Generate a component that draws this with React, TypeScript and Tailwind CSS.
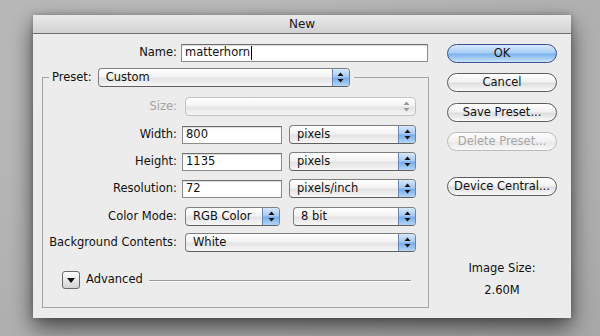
import type { ReactNode } from "react";

function Arrows({ disabled }: { disabled?: boolean }) {
  const fill = disabled ? "#9a9a9a" : "#111";
  return (
    <svg width="7" height="11" viewBox="0 0 7 11">
      <path d="M3.5 0.5 L6.5 4 L0.5 4 Z" fill={fill} />
      <path d="M0.5 7 L6.5 7 L3.5 10.5 Z" fill={fill} />
    </svg>
  );
}

function Popup({ label, className, disabled }: { label?: string; className: string; disabled?: boolean }) {
  return (
    <div
      className={`${className} flex h-[19px] items-stretch overflow-hidden rounded-[4px] border ${
        disabled ? "border-[#c2c2c2]" : "border-[#7f7f7f] border-b-[#5f5f5f]"
      } bg-[linear-gradient(#ffffff,#f3f3f3_45%,#e4e4e4_55%,#f6f6f6)]`}
    >
      <span className="flex-1 pl-[7px] leading-[17px] text-[#111]">{label}</span>
      {disabled ? (
        <span className="flex w-[17px] items-center justify-center">
          <Arrows disabled />
        </span>
      ) : (
        <span className="flex w-[17px] items-center justify-center border-l border-[#6c85b9] bg-[linear-gradient(#d6e8fc,#a7caf3_45%,#78aeea_55%,#b4d6f8)]">
          <Arrows />
        </span>
      )}
    </div>
  );
}

function Field({ value, className, cursor }: { value: string; className: string; cursor?: boolean }) {
  return (
    <div
      className={`${className} flex h-[18px] items-center border border-[#8c8c8c] border-t-[#6e6e6e] bg-white pl-[3px] shadow-[inset_0_1px_1px_rgba(0,0,0,0.15)] text-[#111]`}
    >
      <span>{value}</span>
      {cursor && <span className="ml-px h-[14px] w-px bg-black" />}
    </div>
  );
}

function PushButton({ children, variant }: { children: ReactNode; variant?: "default" | "disabled" }) {
  if (variant === "default") {
    return (
      <div className="flex h-[19px] w-[110px] items-center justify-center rounded-full border border-[#3d4f93] bg-[linear-gradient(#d9eafc,#a9cdf5_45%,#7fb3ec_55%,#c9e4fb)] text-[#111]">
        {children}
      </div>
    );
  }
  if (variant === "disabled") {
    return (
      <div className="flex h-[19px] w-[110px] items-center justify-center rounded-full border border-[#bcbcbc] bg-[linear-gradient(#fdfdfd,#f1f1f1_50%,#e9e9e9_55%,#f8f8f8)] text-[#a6a6a6]">
        {children}
      </div>
    );
  }
  return (
    <div className="flex h-[19px] w-[110px] items-center justify-center rounded-full border border-[#5c5c5c] bg-[linear-gradient(#ffffff,#f2f2f2_45%,#dedede_55%,#fafafa)] text-[#111]">
      {children}
    </div>
  );
}

function Row({ label, disabled, className, children }: { label: string; disabled?: boolean; className: string; children: ReactNode }) {
  return (
    <div className={`${className} flex h-[19px] items-center`}>
      <span className={`w-[134px] shrink-0 text-right ${disabled ? "text-[#a3a3a3]" : "text-[#111]"}`}>{label}</span>
      {children}
    </div>
  );
}

export default function App() {
  return (
    <div className="h-[336px] w-[600px] overflow-hidden bg-[radial-gradient(ellipse_at_30%_20%,#bdbdbd,#b1b1b1_70%,#a8a8a8)] pl-[33px] pt-[15px] font-['DejaVu_Sans',sans-serif] text-[11.5px]">
      <div className="flex h-[303px] w-[538px] flex-col bg-[#ececec] shadow-[0_10px_22px_rgba(0,0,0,0.6),0_0_6px_rgba(0,0,0,0.25)]">
        {/* title bar */}
        <div className="flex h-[19px] shrink-0 items-center justify-center border-b border-[#6f6f6f] bg-[linear-gradient(#eaeaea,#d2d2d2)] text-[12px] text-[#1a1a1a]">
          New
        </div>

        <div className="flex flex-1">
          {/* left part */}
          <div className="flex w-[414px] flex-col">
            <div className="mt-[10px] flex h-[18px] items-center">
              <span className="w-[144px] text-right text-[#111]">Name:</span>
              <Field value="matterhorn" className="ml-[4px] w-[247px]" cursor />
            </div>

            <div className="relative ml-[9px] mt-[15px] h-[231px] w-[387px] border border-[#a4a4a4] pt-[19px]">
              <div className="absolute left-[6px] top-[-10px] flex items-center bg-[#ececec] pl-[3px] pr-[4px]">
                <span className="text-[#111]">Preset:</span>
                <Popup label="Custom" className="ml-[6px] w-[252px]" />
              </div>

              <Row label="Size:" disabled className="">
                <Popup className="ml-[8px] w-[231px]" disabled />
              </Row>
              <Row label="Width:" className="mt-[9px]">
                <Field value="800" className="ml-[5px] w-[100px]" />
                <Popup label="pixels" className="ml-[7px] w-[127px]" />
              </Row>
              <Row label="Height:" className="mt-[8px]">
                <Field value="1135" className="ml-[5px] w-[100px]" />
                <Popup label="pixels" className="ml-[7px] w-[127px]" />
              </Row>
              <Row label="Resolution:" className="mt-[8px]">
                <Field value="72" className="ml-[5px] w-[100px]" />
                <Popup label="pixels/inch" className="ml-[7px] w-[127px]" />
              </Row>
              <Row label="Color Mode:" className="mt-[9px]">
                <Popup label="RGB Color" className="ml-[8px] w-[95px]" />
                <Popup label="8 bit" className="ml-[13px] w-[123px]" />
              </Row>
              <Row label="Background Contents:" className="mt-[7px]">
                <Popup label="White" className="ml-[8px] w-[231px]" />
              </Row>

              <div className="mt-[19px] flex h-[18px] items-center">
                <div className="ml-[19px] flex h-[18px] w-[18px] items-center justify-center rounded-[3px] border border-[#6a6a6a] bg-[linear-gradient(#ffffff,#e6e6e6_55%,#d4d4d4)]">
                  <svg width="8" height="5" viewBox="0 0 8 5">
                    <path d="M0 0 L8 0 L4 5 Z" fill="#111" />
                  </svg>
                </div>
                <span className="ml-[6px] text-[#111]">Advanced</span>
                <div className="ml-[6px] h-px w-[262px] bg-[#9c9c9c] shadow-[0_1px_0_#fafafa]" />
              </div>
            </div>
          </div>

          {/* right part */}
          <div className="flex w-[110px] flex-col items-center">
            <div className="mt-[10px]">
              <PushButton variant="default">OK</PushButton>
            </div>
            <div className="mt-[10px]">
              <PushButton>Cancel</PushButton>
            </div>
            <div className="mt-[11px]">
              <PushButton>Save Preset...</PushButton>
            </div>
            <div className="mt-[10px]">
              <PushButton variant="disabled">Delete Preset...</PushButton>
            </div>
            <div className="mt-[26px]">
              <PushButton>Device Central...</PushButton>
            </div>
            <div className="mt-[65px] leading-[14px] text-[#111]">Image Size:</div>
            <div className="mt-[8px] leading-[14px] text-[#111]">2.60M</div>
          </div>
        </div>
      </div>
    </div>
  );
}
